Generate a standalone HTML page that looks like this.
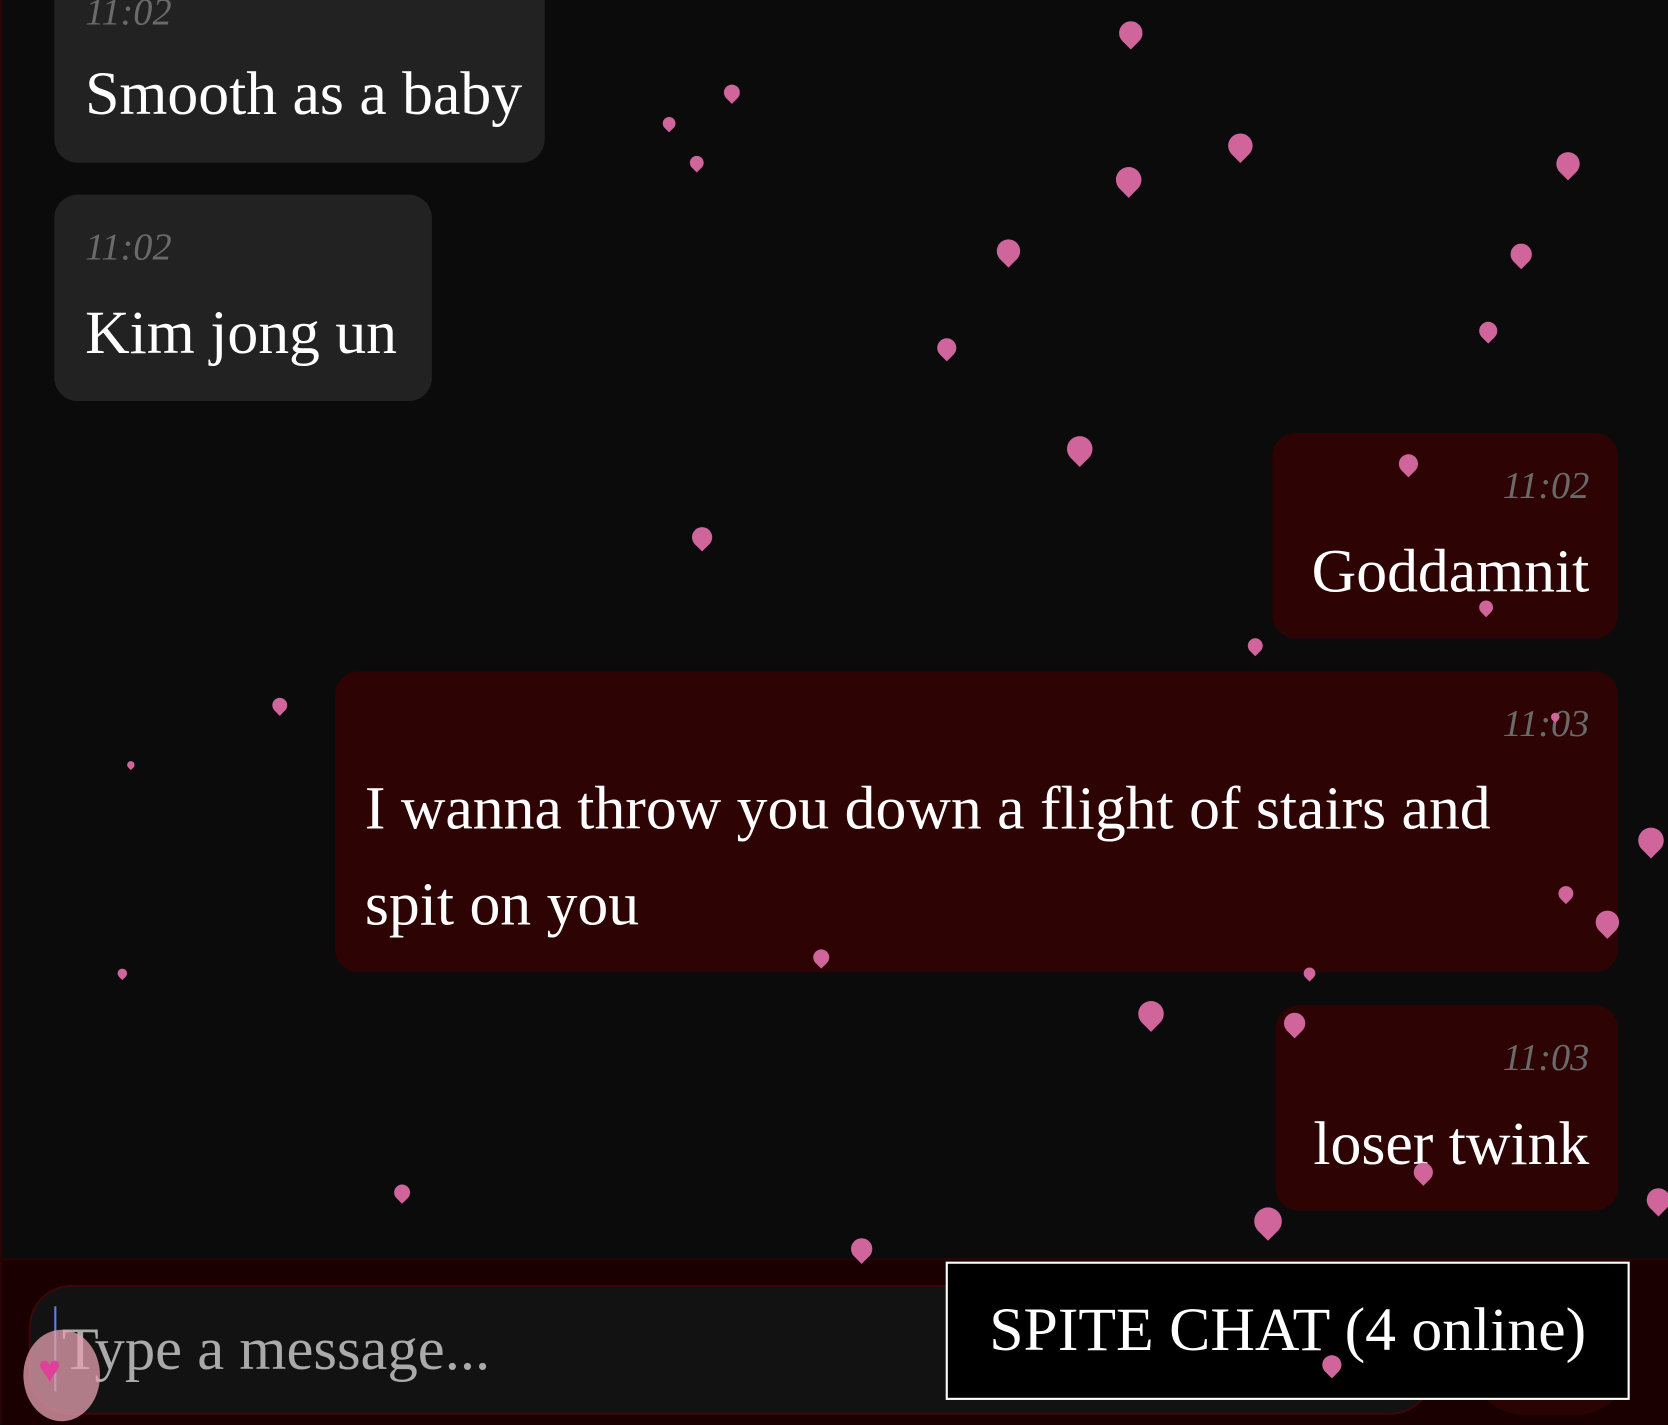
<!DOCTYPE html>
<html><head><meta charset="utf-8"><style>
html,body{margin:0;padding:0;background:#0b0b0b;width:1668px;height:1423px;overflow:hidden}
#w{position:absolute;left:0;top:0;width:1568px;height:1338px;transform:scale(1.06378);transform-origin:0 0;font-family:"Liberation Serif",serif;border-left:2px solid #2a0505;box-sizing:border-box}
.b{position:absolute;border-radius:22px;color:#fff;box-sizing:border-box}
.l{background:#222}
.r{background:#2e0303}
.t{position:absolute;font-style:italic;color:#6a6a6a;font-size:36px}
.m{position:absolute;font-size:58px;white-space:nowrap}
.h{position:absolute;background:#cf659b;border-radius:50% 50% 50% 0;transform:translate(-50%,-50%) rotate(-45deg)}
</style></head><body><div id="w">
<div class="b l" style="left:49px;top:-40px;width:461px;height:193px"><div class="t" style="left:29px;top:30px">11:02</div><div class="m" style="left:29px;top:94px">Smooth as a baby</div></div>
<div class="b l" style="left:49px;top:183px;width:355px;height:194px"><div class="t" style="left:29px;top:28px">11:02</div><div class="m" style="left:29px;top:96px">Kim jong un</div></div>
<div class="b r" style="left:1194px;top:407px;width:325px;height:193px"><div class="t" style="right:27px;top:28px">11:02</div><div class="m" style="right:27px;top:96px">Goddamnit</div></div>
<div class="b r" style="left:313px;top:631px;width:1206px;height:283px"><div class="t" style="right:27px;top:28px">11:03</div><div class="m" style="left:28px;line-height:90px;top:84px">I wanna throw you down a flight of stairs and<br>spit on you</div></div>
<div class="b r" style="left:1197px;top:945px;width:322px;height:193px"><div class="t" style="right:27px;top:28px">11:03</div><div class="m" style="right:27px;top:96px">loser twink</div></div>
<div style="position:absolute;left:0;top:1183px;width:1568px;height:155px;background:#1a0000;border-top:2px solid #2a0505"></div>
<div style="position:absolute;left:1380px;top:1215px;width:150px;height:115px;border-radius:50px;background:#2a0303"></div>
<div style="position:absolute;left:25px;top:1208px;width:1320px;height:122px;border-radius:40px;background:#121212;border:2px solid #3a0808;box-sizing:border-box"></div>
<div style="position:absolute;left:56px;top:1236px;font-size:57px;color:#aaa">Type a message...</div>
<div style="position:absolute;left:49px;top:1228px;width:2px;height:80px;background:#5a7fe0"></div>
<div style="position:absolute;left:20px;top:1250px;width:72px;height:86px;border-radius:50%;background:rgba(230,160,175,.75)"></div>
<div style="position:absolute;left:34px;top:1266px;width:36px;height:30px;font-size:36px;color:#e0409a">♥</div>
<div style="position:absolute;left:887px;top:1186px;width:643px;height:130px;background:#000;border:2px solid #fff;box-sizing:border-box;color:#fff;font-size:58px;text-align:center;line-height:124px;white-space:nowrap">SPITE CHAT (4 online)</div>
<div class="h" style="left:1061px;top:31px;width:22px;height:22px"></div>
<div class="h" style="left:686px;top:87px;width:15px;height:15px"></div>
<div class="h" style="left:627px;top:116px;width:12px;height:12px"></div>
<div class="h" style="left:653px;top:153px;width:13px;height:13px"></div>
<div class="h" style="left:1164px;top:137px;width:23px;height:23px"></div>
<div class="h" style="left:1059px;top:169px;width:24px;height:24px"></div>
<div class="h" style="left:1472px;top:154px;width:22px;height:22px"></div>
<div class="h" style="left:946px;top:236px;width:22px;height:22px"></div>
<div class="h" style="left:1428px;top:239px;width:20px;height:20px"></div>
<div class="h" style="left:888px;top:327px;width:18px;height:18px"></div>
<div class="h" style="left:1397px;top:311px;width:17px;height:17px"></div>
<div class="h" style="left:1013px;top:422px;width:24px;height:24px"></div>
<div class="h" style="left:1322px;top:436px;width:18px;height:18px"></div>
<div class="h" style="left:658px;top:505px;width:19px;height:19px"></div>
<div class="h" style="left:1395px;top:571px;width:13px;height:13px"></div>
<div class="h" style="left:1178px;top:607px;width:14px;height:14px"></div>
<div class="h" style="left:261px;top:663px;width:14px;height:14px"></div>
<div class="h" style="left:1460px;top:674px;width:8px;height:8px"></div>
<div class="h" style="left:121px;top:719px;width:7px;height:7px"></div>
<div class="h" style="left:1550px;top:790px;width:24px;height:24px"></div>
<div class="h" style="left:1470px;top:840px;width:14px;height:14px"></div>
<div class="h" style="left:1509px;top:867px;width:22px;height:22px"></div>
<div class="h" style="left:770px;top:900px;width:15px;height:15px"></div>
<div class="h" style="left:113px;top:915px;width:9px;height:9px"></div>
<div class="h" style="left:1229px;top:915px;width:11px;height:11px"></div>
<div class="h" style="left:1080px;top:953px;width:24px;height:24px"></div>
<div class="h" style="left:1215px;top:962px;width:20px;height:20px"></div>
<div class="h" style="left:1336px;top:1102px;width:18px;height:18px"></div>
<div class="h" style="left:376px;top:1121px;width:15px;height:15px"></div>
<div class="h" style="left:1190px;top:1148px;width:26px;height:26px"></div>
<div class="h" style="left:808px;top:1174px;width:20px;height:20px"></div>
<div class="h" style="left:1557px;top:1128px;width:22px;height:22px"></div>
<div class="h" style="left:1250px;top:1283px;width:18px;height:18px"></div>
</div></body></html>
